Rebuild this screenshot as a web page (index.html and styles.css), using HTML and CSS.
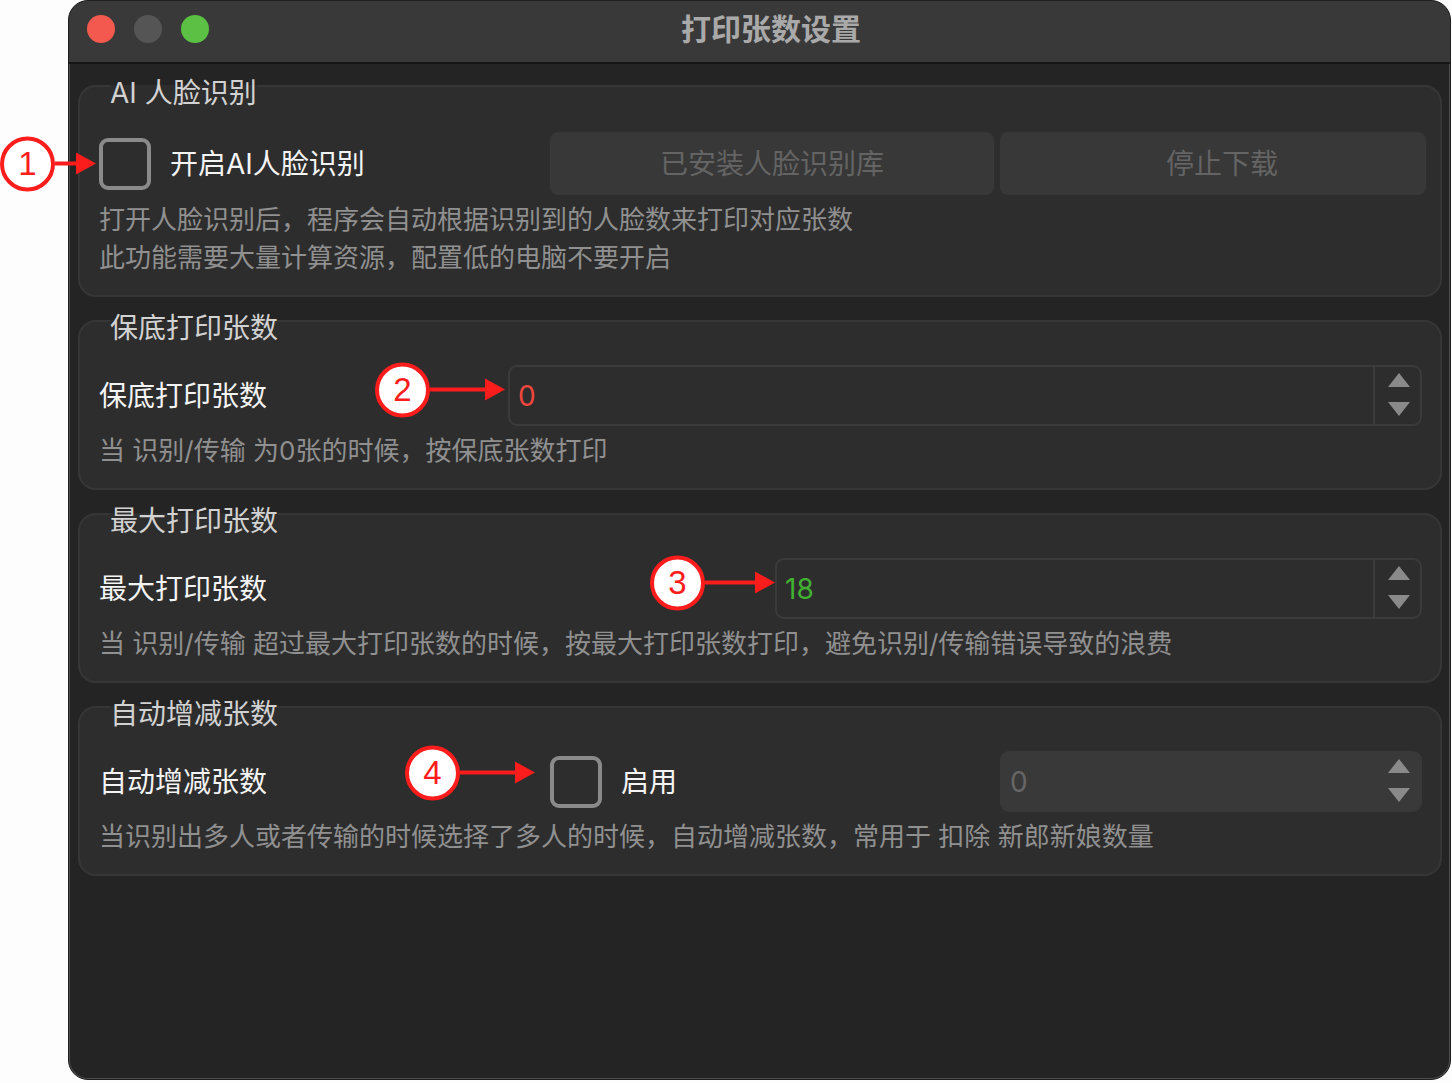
FILE: index.html
```html
<!DOCTYPE html>
<html lang="zh-CN">
<head>
    <meta charset="UTF-8">
    <meta name="viewport" content="width=device-width, initial-scale=1.0">
    <title>打印张数设置</title>
    <link rel="stylesheet" href="styles.css">
</head>
<body>
    <main class="window">
        <header class="titlebar">
            <div class="lights">
                <button type="button" class="light light-close" aria-label="关闭"></button>
                <button type="button" class="light light-min" aria-label="最小化" disabled></button>
                <button type="button" class="light light-zoom" aria-label="缩放"></button>
            </div>
            <h1 class="title">打印张数设置</h1>
        </header>

        <form class="panel">
            <fieldset class="group group-face">
                <legend>AI 人脸识别</legend>
                <div class="row row-thirds">
                    <div class="anchor">
                        <div class="mark mark-face"><span class="num">1</span><span class="line"></span><span class="tip"></span></div>
                        <label class="check"><input type="checkbox">开启AI人脸识别</label>
                    </div>
                    <button type="button" class="button" disabled>已安装人脸识别库</button>
                    <button type="button" class="button button-stop" disabled>停止下载</button>
                </div>
                <p class="hint">打开人脸识别后，程序会自动根据识别到的人脸数来打印对应张数<br>此功能需要大量计算资源，配置低的电脑不要开启</p>
            </fieldset>

            <fieldset class="group">
                <legend>保底打印张数</legend>
                <div class="row row-min">
                    <label for="min-count">保底打印张数</label>
                    <div class="anchor">
                        <div class="mark mark-min"><span class="num">2</span><span class="line"></span><span class="tip"></span></div>
                        <div class="spin">
                            <input type="number" id="min-count" class="red" value="0">
                            <div class="steps">
                                <button type="button" aria-label="增加"><svg viewBox="0 0 22 14"><path d="M11 0L22 14H0z"/></svg></button>
                                <button type="button" aria-label="减少"><svg viewBox="0 0 22 14"><path d="M0 0H22L11 14z"/></svg></button>
                            </div>
                        </div>
                    </div>
                </div>
                <p class="hint">当 识别/传输 为0张的时候，按保底张数打印</p>
            </fieldset>

            <fieldset class="group">
                <legend>最大打印张数</legend>
                <div class="row row-max">
                    <label for="max-count">最大打印张数</label>
                    <div class="anchor">
                        <div class="mark mark-max"><span class="num">3</span><span class="line"></span><span class="tip"></span></div>
                        <div class="spin">
                            <input type="number" id="max-count" class="green" value="18">
                            <div class="steps">
                                <button type="button" aria-label="增加"><svg viewBox="0 0 22 14"><path d="M11 0L22 14H0z"/></svg></button>
                                <button type="button" aria-label="减少"><svg viewBox="0 0 22 14"><path d="M0 0H22L11 14z"/></svg></button>
                            </div>
                        </div>
                    </div>
                </div>
                <p class="hint">当 识别/传输 超过最大打印张数的时候，按最大打印张数打印，避免识别/传输错误导致的浪费</p>
            </fieldset>

            <fieldset class="group">
                <legend>自动增减张数</legend>
                <div class="row row-thirds">
                    <label for="auto-count">自动增减张数</label>
                    <div class="anchor">
                        <div class="mark mark-auto"><span class="num">4</span><span class="line"></span><span class="tip"></span></div>
                        <label class="check"><input type="checkbox">启用</label>
                    </div>
                    <div class="spin spin-off">
                        <input type="number" id="auto-count" value="0" disabled>
                        <div class="steps">
                            <button type="button" aria-label="增加" disabled><svg viewBox="0 0 22 14"><path d="M11 0L22 14H0z"/></svg></button>
                            <button type="button" aria-label="减少" disabled><svg viewBox="0 0 22 14"><path d="M0 0H22L11 14z"/></svg></button>
                        </div>
                    </div>
                </div>
                <p class="hint">当识别出多人或者传输的时候选择了多人的时候，自动增减张数，常用于 扣除 新郎新娘数量</p>
            </fieldset>
        </form>
    </main>
</body>
</html>
```
FILE: styles.css
```css
* {
    box-sizing: border-box;
}

body {
    margin: 0;
    min-height: 100vh;
    padding: 0 1px 3px 68px;
    display: flex;
    background-color: #fdfdfd;
    color: #f4f4f4;
    font-family: Inter, "Noto Sans CJK SC", sans-serif;
    font-size: 28px;
    line-height: 38px;
}

button,
input {
    font: inherit;
    color: inherit;
    margin: 0;
}

.window {
    flex: 1;
    min-width: 0;
    display: flex;
    flex-direction: column;
    border: 1px solid #1e1e1e;
    border-radius: 20px;
    background-color: #242424;
}

/* title bar */
.titlebar {
    display: flex;
    align-items: center;
    height: 63px;
    padding: 0 117px 5px 18px;
    background-color: #393939;
    border-bottom: 2px solid #161616;
    border-radius: 19px 19px 0 0;
}

.lights {
    display: flex;
    gap: 19px;
}

.light {
    width: 28px;
    height: 28px;
    padding: 0;
    border: none;
    border-radius: 50%;
}

.light-close {
    background-color: #f4594f;
}

.light-min {
    background-color: #555;
}

.light-zoom {
    background-color: #5bc043;
}

.title {
    flex: 1;
    margin: 0;
    text-align: center;
    font-size: 30px;
    font-weight: 700;
    color: #a9a9a9;
}

/* content */
.panel {
    flex: 1;
    display: flex;
    flex-direction: column;
    gap: 3px;
    padding: 1px 7px 20px 8px;
    border: 1px solid #4c4c4c;
    border-top: none;
    border-radius: 0 0 19px 19px;
}

.group {
    min-width: 0;
    margin: 0;
    padding: 23px 14px 18px 19px;
    border: 2px solid #363636;
    border-radius: 18px;
    background-color: #2d2d2d;
}

.group-face {
    padding-top: 25px;
}

.group legend {
    margin-left: 11px;
    padding: 14px 0 0;
    line-height: 28px;
    color: #d2d2d2;
}

.row {
    display: grid;
    align-items: center;
    min-height: 61px;
    margin-bottom: 6px;
}

.row-thirds {
    grid-template-columns: minmax(0, 445fr) minmax(0, 444fr) minmax(0, 426fr);
    column-gap: 6px;
}

.row-min {
    grid-template-columns: minmax(0, 409fr) minmax(0, 918fr);
}

.row-max {
    grid-template-columns: minmax(0, 676fr) minmax(0, 651fr);
}

.hint {
    margin: 0;
    font-size: 26px;
    color: #909090;
}

.button {
    height: 63px;
    padding: 0 16px;
    border: none;
    border-radius: 8px;
    background-color: #383838;
    color: #646464;
}

.button-stop {
    padding-left: 34px;
}

.anchor {
    position: relative;
}

.check {
    display: flex;
    align-items: center;
    gap: 19px;
}

.check input {
    appearance: none;
    width: 52px;
    height: 52px;
    border: 4px solid #8a8a8a;
    border-radius: 9px;
}

.spin {
    display: flex;
    height: 61px;
    margin-right: 4px;
    border: 2px solid #3b3b3b;
    border-radius: 9px;
}

.spin input {
    flex: 1;
    min-width: 0;
    padding: 0 8px;
    border: none;
    background: none;
    appearance: textfield;
}

.spin input::-webkit-inner-spin-button {
    appearance: none;
    margin: 0;
}

.red {
    color: #f0473c;
}

.green {
    color: #42b132;
}

.steps {
    display: flex;
    flex-direction: column;
    justify-content: center;
    align-items: center;
    gap: 15px;
    width: 47px;
    padding: 0 0 2px 3px;
    border-left: 2px solid #3b3b3b;
}

.steps button {
    display: block;
    padding: 0;
    border: none;
    background: none;
}

.steps svg {
    display: block;
    width: 22px;
    height: 14px;
    fill: #8a8a8a;
}

.spin-off {
    background-color: #393939;
    border-color: #393939;
    color: #666;
}

.spin-off .steps {
    border-color: transparent;
}

/* numbered callouts pointing at the controls */
.mark {
    position: absolute;
    z-index: 1;
    right: 100%;
    top: 50%;
    display: flex;
    align-items: center;
    transform: translateY(-50%);
}

.num {
    width: 55px;
    height: 55px;
    border: 4px solid #fb1d1c;
    border-radius: 50%;
    background-color: #fff;
    color: #fb1d1c;
    font-family: "Liberation Sans", Arial, sans-serif;
    font-size: 33px;
    line-height: 46px;
    text-align: center;
}

.line {
    width: 55px;
    height: 4px;
    background-color: #fb1d1c;
}

.tip {
    border-left: 20px solid #fb1d1c;
    border-top: 11px solid transparent;
    border-bottom: 11px solid transparent;
}

.mark-face {
    margin-right: 3px;
}

.mark-face .line {
    width: 21px;
}

.mark-min {
    margin: -6px 3px 0 0;
}

.mark-max {
    margin-top: -6px;
}

.mark-max .line {
    width: 50px;
}

.mark-auto {
    margin: -9px 15px 0 0;
}
```
